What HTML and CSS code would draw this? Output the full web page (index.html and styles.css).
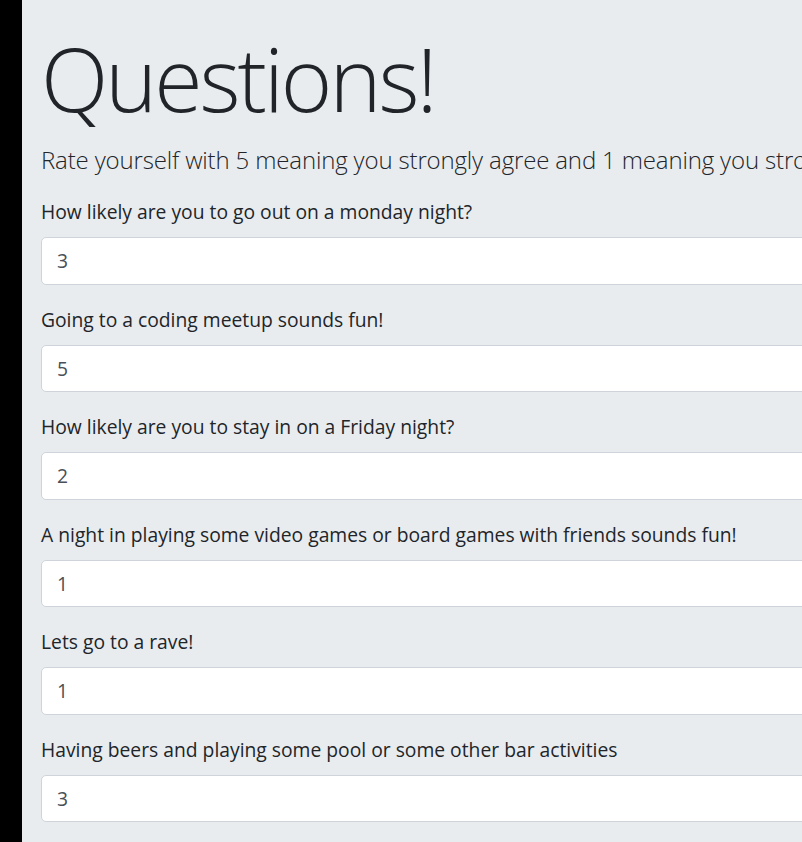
FILE: index.html
```html
<!DOCTYPE html>
<html lang="en">
<head>
<meta charset="utf-8">
<title>Questions!</title>
<link rel="stylesheet" href="styles.css">
</head>
<body>
<div class="page">
  <div class="edge"></div>
  <main class="jumbotron">
    <h1 class="title">Questions!</h1>
    <p class="lead">Rate yourself with 5 meaning you strongly agree and 1 meaning you strongly disagree.</p>
    <form class="survey">
      <div class="form-group">
        <label class="q-label" for="q1">How likely are you to go out on a monday night?</label>
        <input class="form-control" id="q1" type="text" value="3">
      </div>
      <div class="form-group">
        <label class="q-label" for="q2">Going to a coding meetup sounds fun!</label>
        <input class="form-control" id="q2" type="text" value="5">
      </div>
      <div class="form-group">
        <label class="q-label" for="q3">How likely are you to stay in on a Friday night?</label>
        <input class="form-control" id="q3" type="text" value="2">
      </div>
      <div class="form-group">
        <label class="q-label" for="q4">A night in playing some video games or board games with friends sounds fun!</label>
        <input class="form-control" id="q4" type="text" value="1">
      </div>
      <div class="form-group">
        <label class="q-label" for="q5">Lets go to a rave!</label>
        <input class="form-control" id="q5" type="text" value="1">
      </div>
      <div class="form-group">
        <label class="q-label" for="q6">Having beers and playing some pool or some other bar activities</label>
        <input class="form-control" id="q6" type="text" value="3">
      </div>
    </form>
  </main>
</div>
</body>
</html>
```
FILE: styles.css
```css
html, body {
  margin: 0;
  padding: 0;
  height: 100%;
  overflow: hidden;
}
body {
  background: #e9ecef;
  font-family: "Open Sans", "Noto Sans", sans-serif;
  color: #212529;
}
.page {
  display: flex;
  min-height: 100%;
  width: 1300px;
}
.edge {
  flex: 0 0 22px;
  background: #000;
}
.jumbotron {
  flex: 1;
  background: #e9ecef;
  padding: 23.5px 19px 0 19px;
}
.title {
  margin: 0 0 9.5px 0;
  font-size: 88px;
  font-weight: 300;
  line-height: 108px;
  letter-spacing: -3px;
}
.lead {
  margin: 0 0 18.5px 0;
  font-size: 24px;
  font-weight: 300;
  line-height: 37.5px;
  letter-spacing: -0.15px;
  white-space: nowrap;
}
.survey {
  display: flex;
  flex-direction: column;
  gap: 20px;
}
.form-group {
  display: flex;
  flex-direction: column;
}
.q-label {
  font-size: 19.3px;
  line-height: 30px;
  margin-bottom: 10px;
}
.form-control {
  box-sizing: border-box;
  height: 47.5px;
  padding: 7px 15px;
  font-family: inherit;
  font-size: 19.3px;
  color: #495057;
  background: #fff;
  border: 1px solid #ced4da;
  border-radius: 5px;
  outline: none;
}
```
